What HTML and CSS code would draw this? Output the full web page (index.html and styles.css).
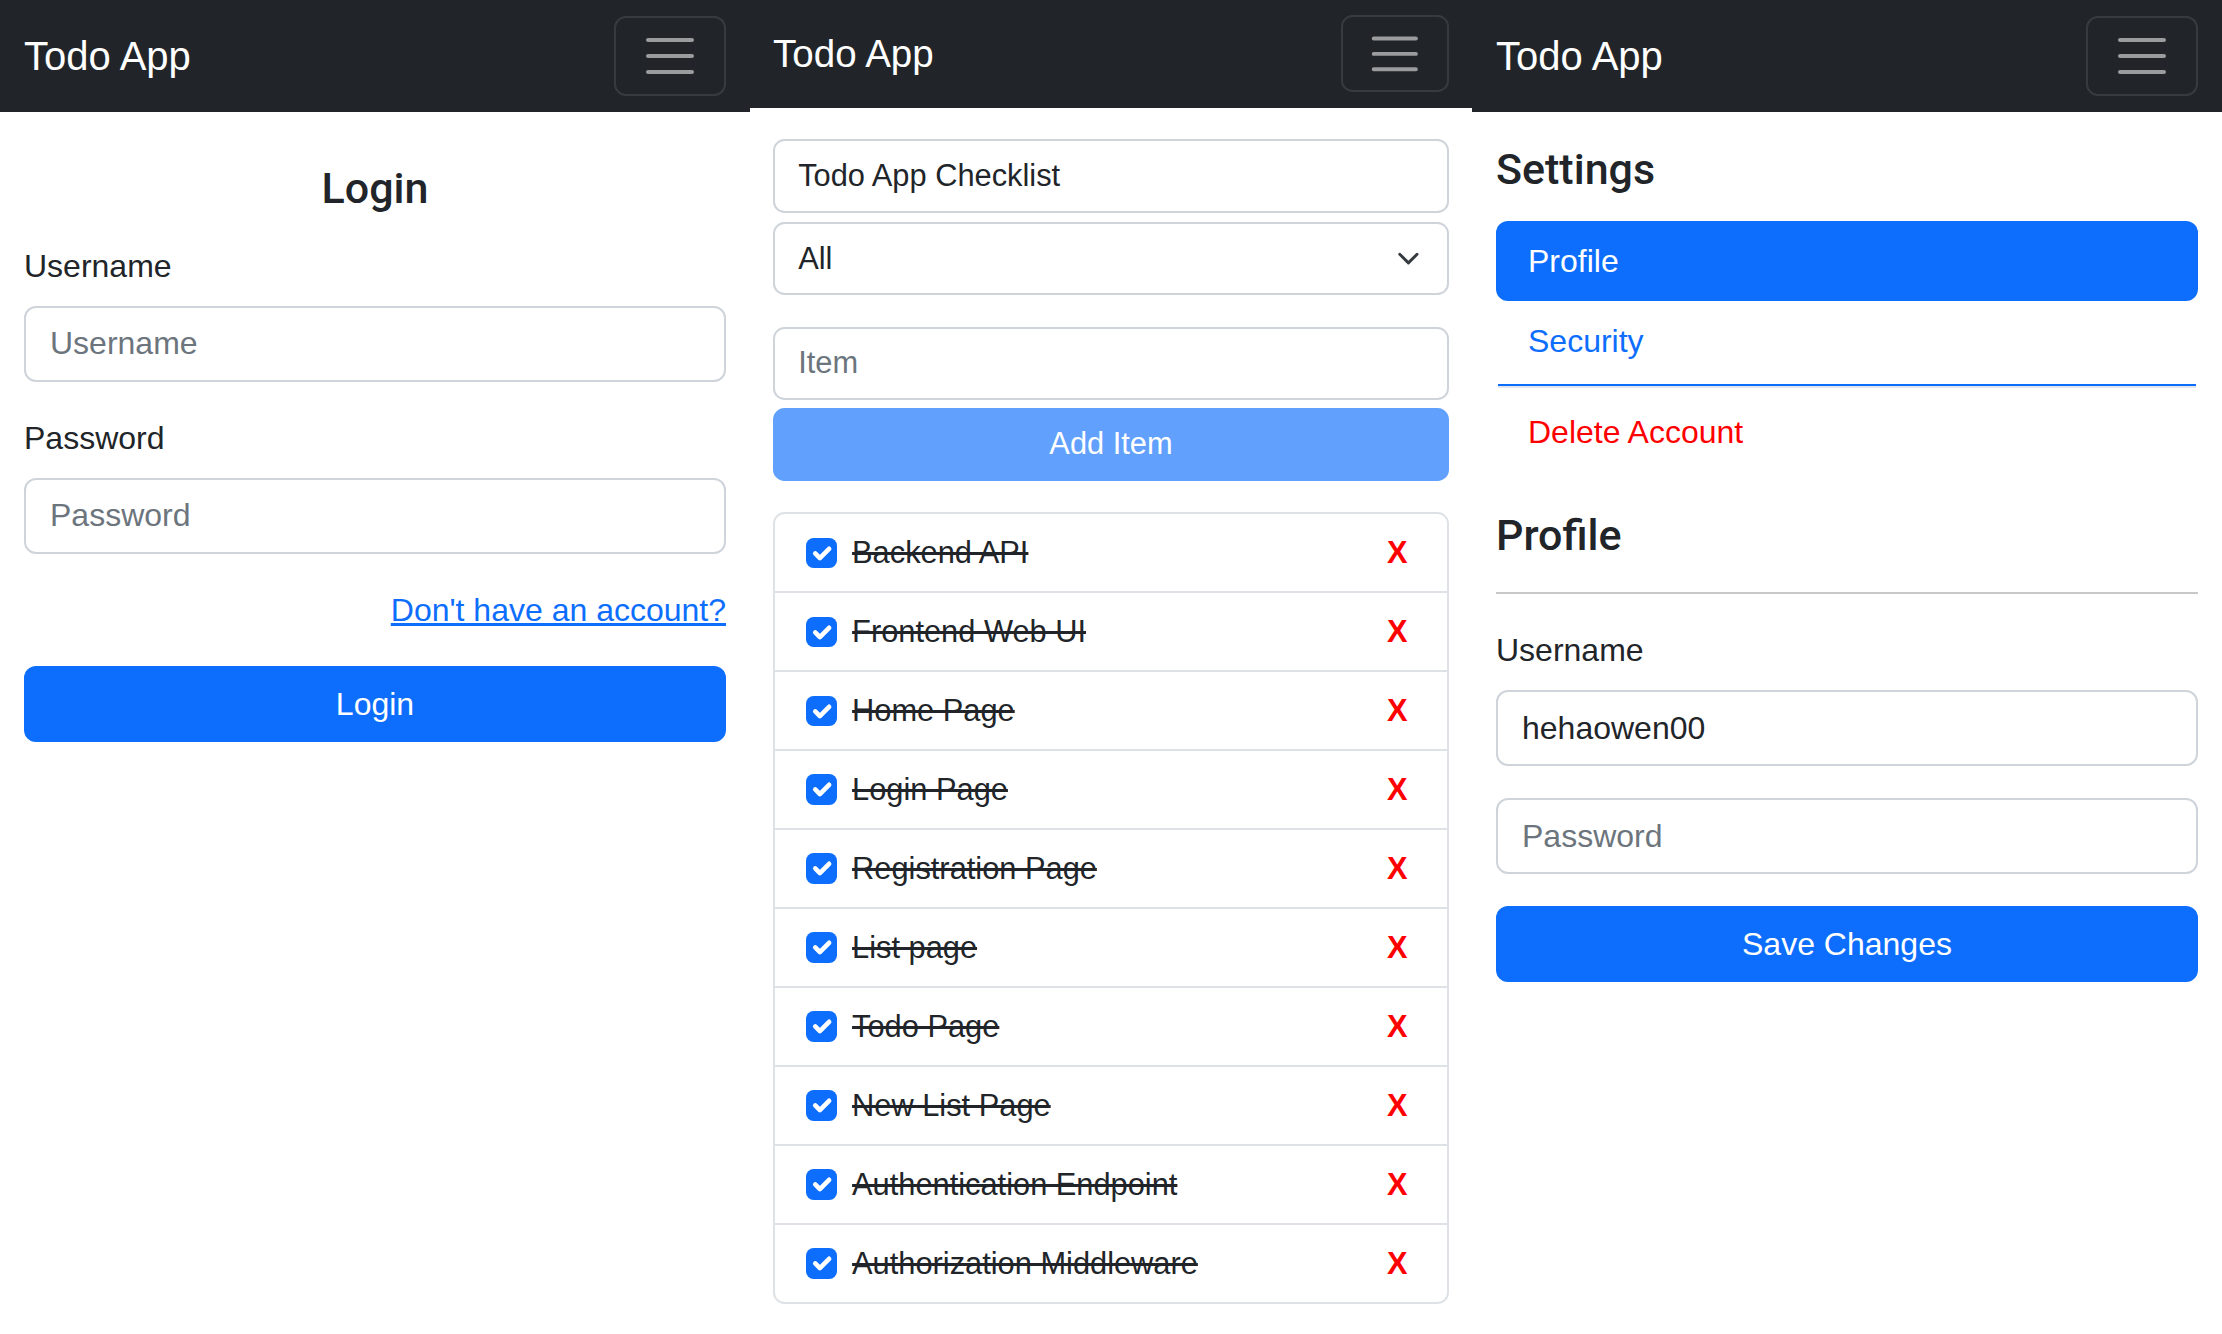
FILE: index.html
```html
<!DOCTYPE html>
<html lang="en">
<head>
<meta charset="utf-8">
<title>Todo App</title>
<link rel="stylesheet" href="styles.css">
</head>
<body>
<div class="screens">

  <section class="phone">
    <nav class="navbar">
      <span class="brand">Todo App</span>
      <button class="toggler" type="button" aria-label="Toggle navigation">
        <svg viewBox="0 0 30 30"><path d="M4 7h22M4 15h22M4 23h22" stroke="rgba(255,255,255,0.55)" stroke-width="2" stroke-linecap="round"/></svg>
      </button>
    </nav>
    <main class="container">
      <h4 class="heading login-title">Login</h4>
      <div class="field">
        <label class="form-label">Username</label>
        <input class="form-control" type="text" placeholder="Username">
      </div>
      <div class="field">
        <label class="form-label">Password</label>
        <input class="form-control" type="password" placeholder="Password">
      </div>
      <p class="link-row"><a href="#">Don't have an account?</a></p>
      <button class="btn" type="button">Login</button>
    </main>
  </section>

  <section class="phone phone-todo">
    <nav class="navbar">
      <span class="brand">Todo App</span>
      <button class="toggler" type="button" aria-label="Toggle navigation">
        <svg viewBox="0 0 30 30"><path d="M4 7h22M4 15h22M4 23h22" stroke="rgba(255,255,255,0.55)" stroke-width="2" stroke-linecap="round"/></svg>
      </button>
    </nav>
    <main class="container">
      <input class="form-control title-input" type="text" value="Todo App Checklist">
      <div class="select-wrap">
        <select class="form-control form-select"><option>All</option></select>
        <svg class="chevron" viewBox="0 0 16 16"><path d="m2 5 6 6 6-6" fill="none" stroke="#343a40" stroke-linecap="round" stroke-linejoin="round" stroke-width="2"/></svg>
      </div>
      <div class="add-form">
        <input class="form-control" type="text" placeholder="Item">
        <button class="btn btn-disabled" type="button" disabled>Add Item</button>
      </div>
      <ul class="list-group">
        <li class="item"><span class="check"><svg viewBox="0 0 20 20"><path d="m6 10 3 3 6-6" fill="none" stroke="#fff" stroke-linecap="round" stroke-linejoin="round" stroke-width="3"/></svg></span><span class="item-text">Backend API</span><span class="remove">X</span></li>
        <li class="item"><span class="check"><svg viewBox="0 0 20 20"><path d="m6 10 3 3 6-6" fill="none" stroke="#fff" stroke-linecap="round" stroke-linejoin="round" stroke-width="3"/></svg></span><span class="item-text">Frontend Web UI</span><span class="remove">X</span></li>
        <li class="item"><span class="check"><svg viewBox="0 0 20 20"><path d="m6 10 3 3 6-6" fill="none" stroke="#fff" stroke-linecap="round" stroke-linejoin="round" stroke-width="3"/></svg></span><span class="item-text">Home Page</span><span class="remove">X</span></li>
        <li class="item"><span class="check"><svg viewBox="0 0 20 20"><path d="m6 10 3 3 6-6" fill="none" stroke="#fff" stroke-linecap="round" stroke-linejoin="round" stroke-width="3"/></svg></span><span class="item-text">Login Page</span><span class="remove">X</span></li>
        <li class="item"><span class="check"><svg viewBox="0 0 20 20"><path d="m6 10 3 3 6-6" fill="none" stroke="#fff" stroke-linecap="round" stroke-linejoin="round" stroke-width="3"/></svg></span><span class="item-text">Registration Page</span><span class="remove">X</span></li>
        <li class="item"><span class="check"><svg viewBox="0 0 20 20"><path d="m6 10 3 3 6-6" fill="none" stroke="#fff" stroke-linecap="round" stroke-linejoin="round" stroke-width="3"/></svg></span><span class="item-text">List page</span><span class="remove">X</span></li>
        <li class="item"><span class="check"><svg viewBox="0 0 20 20"><path d="m6 10 3 3 6-6" fill="none" stroke="#fff" stroke-linecap="round" stroke-linejoin="round" stroke-width="3"/></svg></span><span class="item-text">Todo Page</span><span class="remove">X</span></li>
        <li class="item"><span class="check"><svg viewBox="0 0 20 20"><path d="m6 10 3 3 6-6" fill="none" stroke="#fff" stroke-linecap="round" stroke-linejoin="round" stroke-width="3"/></svg></span><span class="item-text">New List Page</span><span class="remove">X</span></li>
        <li class="item"><span class="check"><svg viewBox="0 0 20 20"><path d="m6 10 3 3 6-6" fill="none" stroke="#fff" stroke-linecap="round" stroke-linejoin="round" stroke-width="3"/></svg></span><span class="item-text">Authentication Endpoint</span><span class="remove">X</span></li>
        <li class="item"><span class="check"><svg viewBox="0 0 20 20"><path d="m6 10 3 3 6-6" fill="none" stroke="#fff" stroke-linecap="round" stroke-linejoin="round" stroke-width="3"/></svg></span><span class="item-text">Authorization Middleware</span><span class="remove">X</span></li>
      </ul>
    </main>
  </section>

  <section class="phone">
    <nav class="navbar">
      <span class="brand">Todo App</span>
      <button class="toggler" type="button" aria-label="Toggle navigation">
        <svg viewBox="0 0 30 30"><path d="M4 7h22M4 15h22M4 23h22" stroke="rgba(255,255,255,0.55)" stroke-width="2" stroke-linecap="round"/></svg>
      </button>
    </nav>
    <main class="container">
      <h4 class="heading settings-title">Settings</h4>
      <div class="nav-pills">
        <a class="nav-link active" href="#">Profile</a>
        <a class="nav-link" href="#">Security</a>
        <div class="nav-divider"></div>
        <a class="nav-link danger" href="#">Delete Account</a>
      </div>
      <h4 class="heading profile-title">Profile</h4>
      <hr class="rule">
      <div class="field">
        <label class="form-label">Username</label>
        <input class="form-control" type="text" value="hehaowen00">
      </div>
      <div class="field">
        <input class="form-control" type="password" placeholder="Password">
      </div>
      <button class="btn" type="button">Save Changes</button>
    </main>
  </section>

</div>
</body>
</html>
```

FILE: styles.css
```css
* {
  box-sizing: border-box;
}

html,
body {
  margin: 0;
  padding: 0;
  background: #fff;
}

body {
  font-family: "Liberation Sans", Arial, sans-serif;
  font-size: 16px;
  line-height: 1.5;
  color: #212529;
}

.screens {
  display: flex;
  align-items: flex-start;
  width: 2222px;
  height: 1334px;
  overflow: hidden;
}

.phone {
  --bw: 1px;
  flex: none;
  width: 375px;
  height: 667px;
  zoom: 2;
  overflow: hidden;
  background: #fff;
}

.phone-todo {
  --bw: 1.04px;
  zoom: 1.92533;
  height: 693px;
}

/* navbar */
.navbar {
  height: 56px;
  background: #212529;
  display: flex;
  align-items: center;
  justify-content: space-between;
  padding: 8px 12px;
}

.brand {
  color: #fff;
  font-size: 20px;
  line-height: 30px;
  padding: 5px 0;
}

.toggler {
  width: 56px;
  height: 40px;
  padding: 4px 12px;
  border: var(--bw) solid rgba(255, 255, 255, 0.1);
  border-radius: 6px;
  background: transparent;
  display: flex;
  align-items: center;
  justify-content: center;
}

.toggler svg {
  display: block;
  width: 30px;
  height: 30px;
}

/* content */
.container {
  padding: 0 12px;
}

.heading {
  font-family: Roboto, "Liberation Sans", sans-serif;
  font-weight: 500;
  font-size: 21.5px;
  line-height: 1.2;
  margin: 0;
  color: #212529;
}

.login-title {
  text-align: center;
  margin-top: 25.4px;
  margin-bottom: 13.6px;
}

.field {
  margin-bottom: 16px;
}

.form-label {
  display: block;
  margin-bottom: 8px;
}

.form-control {
  display: block;
  width: 100%;
  height: 38px;
  padding: 6px 12px;
  font-family: inherit;
  font-size: 16px;
  line-height: 1.5;
  color: #212529;
  background: #fff;
  border: var(--bw) solid #ced4da;
  border-radius: 6px;
  outline: none;
}

.form-control::placeholder {
  color: #6c757d;
  opacity: 1;
}

.link-row {
  margin: 0 0 16px;
  text-align: right;
}

.link-row a {
  color: #0d6efd;
  text-decoration: underline;
}

.btn {
  display: block;
  width: 100%;
  height: 38px;
  padding: 6px 12px;
  font-family: inherit;
  font-size: 16px;
  line-height: 1.5;
  color: #fff;
  background: #0d6efd;
  border: var(--bw) solid #0d6efd;
  border-radius: 6px;
  text-align: center;
}

.btn-disabled {
  opacity: 0.65;
}

/* todo panel */
.title-input {
  margin-top: 16.4px;
}

.select-wrap {
  position: relative;
  margin-top: 5px;
}

.form-select {
  appearance: none;
  -webkit-appearance: none;
  padding-right: 36px;
}

.chevron {
  position: absolute;
  right: 13px;
  top: 13px;
  width: 16px;
  height: 12px;
  pointer-events: none;
}

.add-form {
  margin-top: 16.4px;
  display: flex;
  flex-direction: column;
  gap: 4px;
}

.list-group {
  list-style: none;
  margin: 16.4px 0 0;
  padding: 0;
  border: var(--bw) solid #dee2e6;
  border-radius: 6px;
  overflow: hidden;
}

.item {
  display: flex;
  align-items: center;
  padding: 8px 16px;
  line-height: 24px;
}

.item + .item {
  border-top: var(--bw) solid #dee2e6;
}

.check {
  flex: none;
  width: 16px;
  height: 16px;
  margin-right: 8px;
  border-radius: 4px;
  background: #0d6efd;
  display: flex;
  align-items: center;
  justify-content: center;
}

.check svg {
  display: block;
  width: 16px;
  height: 16px;
}

.item-text {
  flex: 1;
  text-decoration: line-through;
  color: #212529;
}

.remove {
  color: #ff0000;
  font-weight: bold;
  margin-right: 4.5px;
}

/* settings panel */
.settings-title {
  margin-top: 16px;
  margin-bottom: 12.7px;
}

.nav-pills {
  display: flex;
  flex-direction: column;
}

.nav-link {
  display: block;
  padding: 8px 16px;
  line-height: 24px;
  border-radius: 6px;
  color: #0d6efd;
  text-decoration: none;
}

.nav-link.active {
  background: #0d6efd;
  color: #fff;
}

.nav-link.danger {
  color: #ff0000;
}

.nav-divider {
  height: 2px;
  margin: 1.5px 1.2px 2.2px;
  border-top: 1px solid #0d6efd;
  border-bottom: 1px solid #e3e6ea;
}

.profile-title {
  margin-top: 18.85px;
}

.rule {
  margin: 15.4px 0 16px;
  border: 0;
  border-top: 1px solid #212529;
  opacity: 0.25;
}
```
